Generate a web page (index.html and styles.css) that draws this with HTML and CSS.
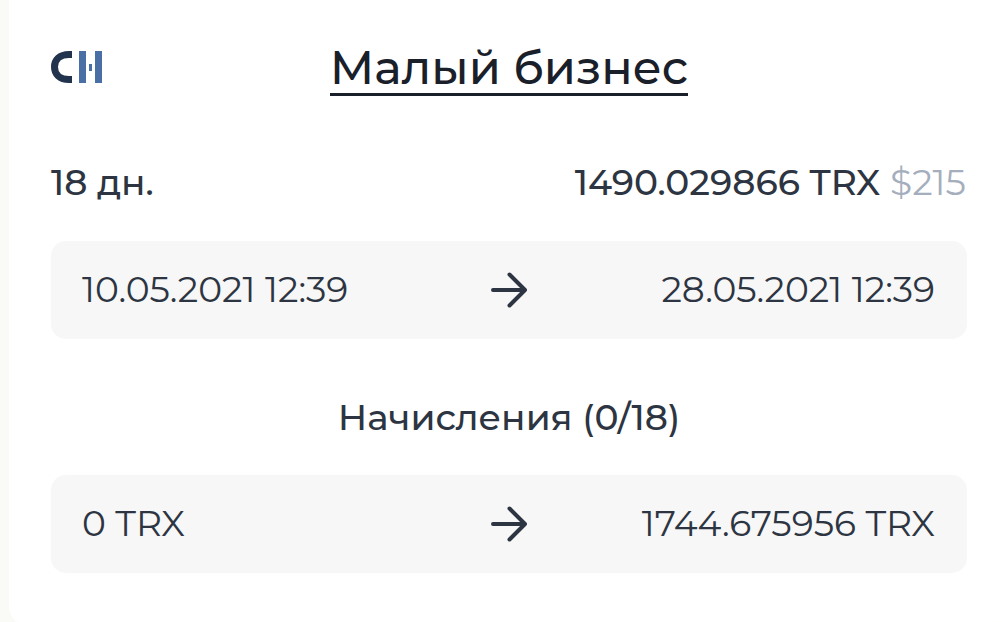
FILE: index.html
```
<!DOCTYPE html>
<html lang="ru">
<head>
  <meta charset="UTF-8" />
  <meta name="viewport" content="width=device-width, initial-scale=1.0" />
  <title>Малый бизнес</title>
  <link rel="stylesheet" href="styles.css">
</head>
<body>
  <div class="card">
    <header class="card-header">
      <svg class="logo" viewBox="0 0 52 32">
        <path d="M21 3.500H18C8.500 3.500 3.500 9 3.500 16S8.500 28.500 18 28.500H21" fill="none" stroke="#22334d" stroke-width="7" />
        <path d="M28 0h7v32h-7zM44 0h7v32h-7zM38 13h3v7h-3z" fill="#4a6fa5" />
      </svg>
      <h1 class="title"><a href="#">Малый бизнес</a></h1>
    </header>

    <div class="summary">
      <span class="term">18 дн.</span>
      <span class="amount">1490.029866 TRX <span class="usd">$215</span></span>
    </div>

    <div class="range">
      <span class="date-from">10.05.2021 12:39</span>
      <svg class="arrow" viewBox="0 0 38 38">
        <path d="M3 19H35M19.500 3.500L35 19L19.500 34.500" />
      </svg>
      <span class="date-to">28.05.2021 12:39</span>
    </div>

    <h2 class="subtitle">Начисления (0/18)</h2>

    <div class="range">
      <span class="paid">0 TRX</span>
      <svg class="arrow" viewBox="0 0 38 38">
        <path d="M3 19H35M19.500 3.500L35 19L19.500 34.500" />
      </svg>
      <span class="total">1744.675956 TRX</span>
    </div>
  </div>
</body>
</html>
```
FILE: styles.css
```
* {
  box-sizing: border-box;
}
body {
  margin: 0;
  height: 622px;
  overflow: hidden;
  background-color: #fafaf7;
  color: #2d3542;
  font-family: Montserrat, Inter, sans-serif;
  font-size: 36px;
  font-weight: 400;
}
.card {
  width: 1000px;
  height: 626px;
  margin-left: 9px;
  padding: 41px 42px;
  background-color: #fff;
  border-radius: 0 0 20px 20px;
}
.card-header {
  display: grid;
  grid-template-columns: 52px 1fr 52px;
  height: 60px;
}
.logo {
  width: 52px;
  height: 32px;
  margin-top: 10px;
}
.title {
  margin: 0;
  font-size: 46.3px;
  font-weight: 500;
  line-height: 54px;
  text-align: center;
}
.title a {
  display: inline-block;
  height: 55px;
  color: #1a202a;
  text-decoration: none;
  border-bottom: 3px solid #1a202a;
  white-space: nowrap;
}
.summary {
  display: flex;
  justify-content: space-between;
  margin: 59px 1px 0 0;
  line-height: 44px;
  font-weight: 500;
  white-space: nowrap;
}
.usd {
  color: #a5aebc;
  font-weight: 400;
}
.range {
  display: grid;
  grid-template-columns: 1fr 38px 1fr;
  align-items: center;
  height: 98px;
  margin-top: 37px;
  padding: 0 31px;
  background-color: #f7f7f7;
  border-radius: 15px;
  white-space: nowrap;
}
.range span {
  padding-bottom: 2px;
}
.range span:last-child {
  justify-self: end;
  padding-right: 1px;
}
.arrow {
  width: 38px;
  height: 38px;
  fill: none;
  stroke: #2d3542;
  stroke-width: 4;
  stroke-linecap: round;
  stroke-linejoin: round;
}
.subtitle {
  margin: 56px 0 0;
  font-size: 36px;
  font-weight: 500;
  line-height: 44px;
  text-align: center;
}
.subtitle + .range {
  margin-top: 36px;
}
```
